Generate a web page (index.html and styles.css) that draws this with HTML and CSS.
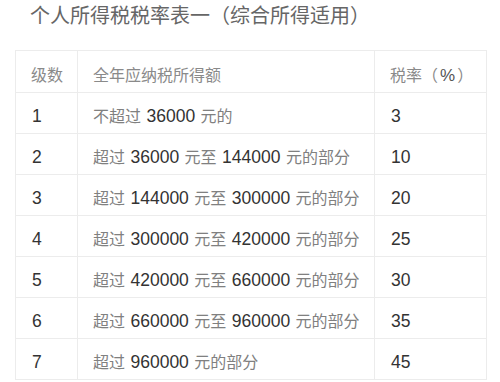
FILE: index.html
```html
<!DOCTYPE html>
<html lang="zh-CN">
<head>
<meta charset="utf-8">
<title>个人所得税税率表一</title>
<link rel="stylesheet" href="styles.css">
</head>
<body>
<div class="page">
  <h1 class="title">个人所得税税率表一（综合所得适用）</h1>
  <table class="rates">
    <colgroup>
      <col class="c-level">
      <col class="c-range">
      <col class="c-rate">
    </colgroup>
    <thead>
      <tr><th>级数</th><th>全年应纳税所得额</th><th>税率（<span class="pct">%</span>）</th></tr>
    </thead>
    <tbody>
      <tr><td><span class="num">1</span></td><td>不超过 <span class="num">36000</span> 元的</td><td><span class="num">3</span></td></tr>
      <tr><td><span class="num">2</span></td><td>超过 <span class="num">36000</span> 元至 <span class="num">144000</span> 元的部分</td><td><span class="num">10</span></td></tr>
      <tr><td><span class="num">3</span></td><td>超过 <span class="num">144000</span> 元至 <span class="num">300000</span> 元的部分</td><td><span class="num">20</span></td></tr>
      <tr><td><span class="num">4</span></td><td>超过 <span class="num">300000</span> 元至 <span class="num">420000</span> 元的部分</td><td><span class="num">25</span></td></tr>
      <tr><td><span class="num">5</span></td><td>超过 <span class="num">420000</span> 元至 <span class="num">660000</span> 元的部分</td><td><span class="num">30</span></td></tr>
      <tr><td><span class="num">6</span></td><td>超过 <span class="num">660000</span> 元至 <span class="num">960000</span> 元的部分</td><td><span class="num">35</span></td></tr>
      <tr><td><span class="num">7</span></td><td>超过 <span class="num">960000</span> 元的部分</td><td><span class="num">45</span></td></tr>
    </tbody>
  </table>
</div>
</body>
</html>
```
FILE: styles.css
```css
html, body {
  margin: 0;
  padding: 0;
  background: #ffffff;
}
body {
  font-family: "Liberation Sans", "Noto Sans CJK SC", sans-serif;
  color: #808080;
}
.page {
  padding: 2px 14px 0 15px;
}
.title {
  margin: 0 0 0 15px;
  font-size: 20px;
  font-weight: normal;
  line-height: 28px;
  color: #666;
  height: 48px;
}
.rates {
  border-collapse: collapse;
  width: 471px;
  table-layout: fixed;
  font-size: 16px;
  line-height: 20px;
}
.c-level { width: 62px; }
.c-range { width: 297px; }
.c-rate { width: 112px; }
.rates th,
.rates td {
  border: 1px solid #ececec;
  padding: 14px 15px 6px;
  text-align: left;
  font-weight: normal;
  white-space: nowrap;
}
.rates th {
  padding-top: 15px;
  color: #8a8a8a;
}
.num {
  color: #333;
  font-size: 17.5px;
  line-height: 1;
  padding: 0 1px;
}
.pct {
  color: #555;
  font-size: 17px;
  line-height: 1;
  padding: 0 2px;
}
```
